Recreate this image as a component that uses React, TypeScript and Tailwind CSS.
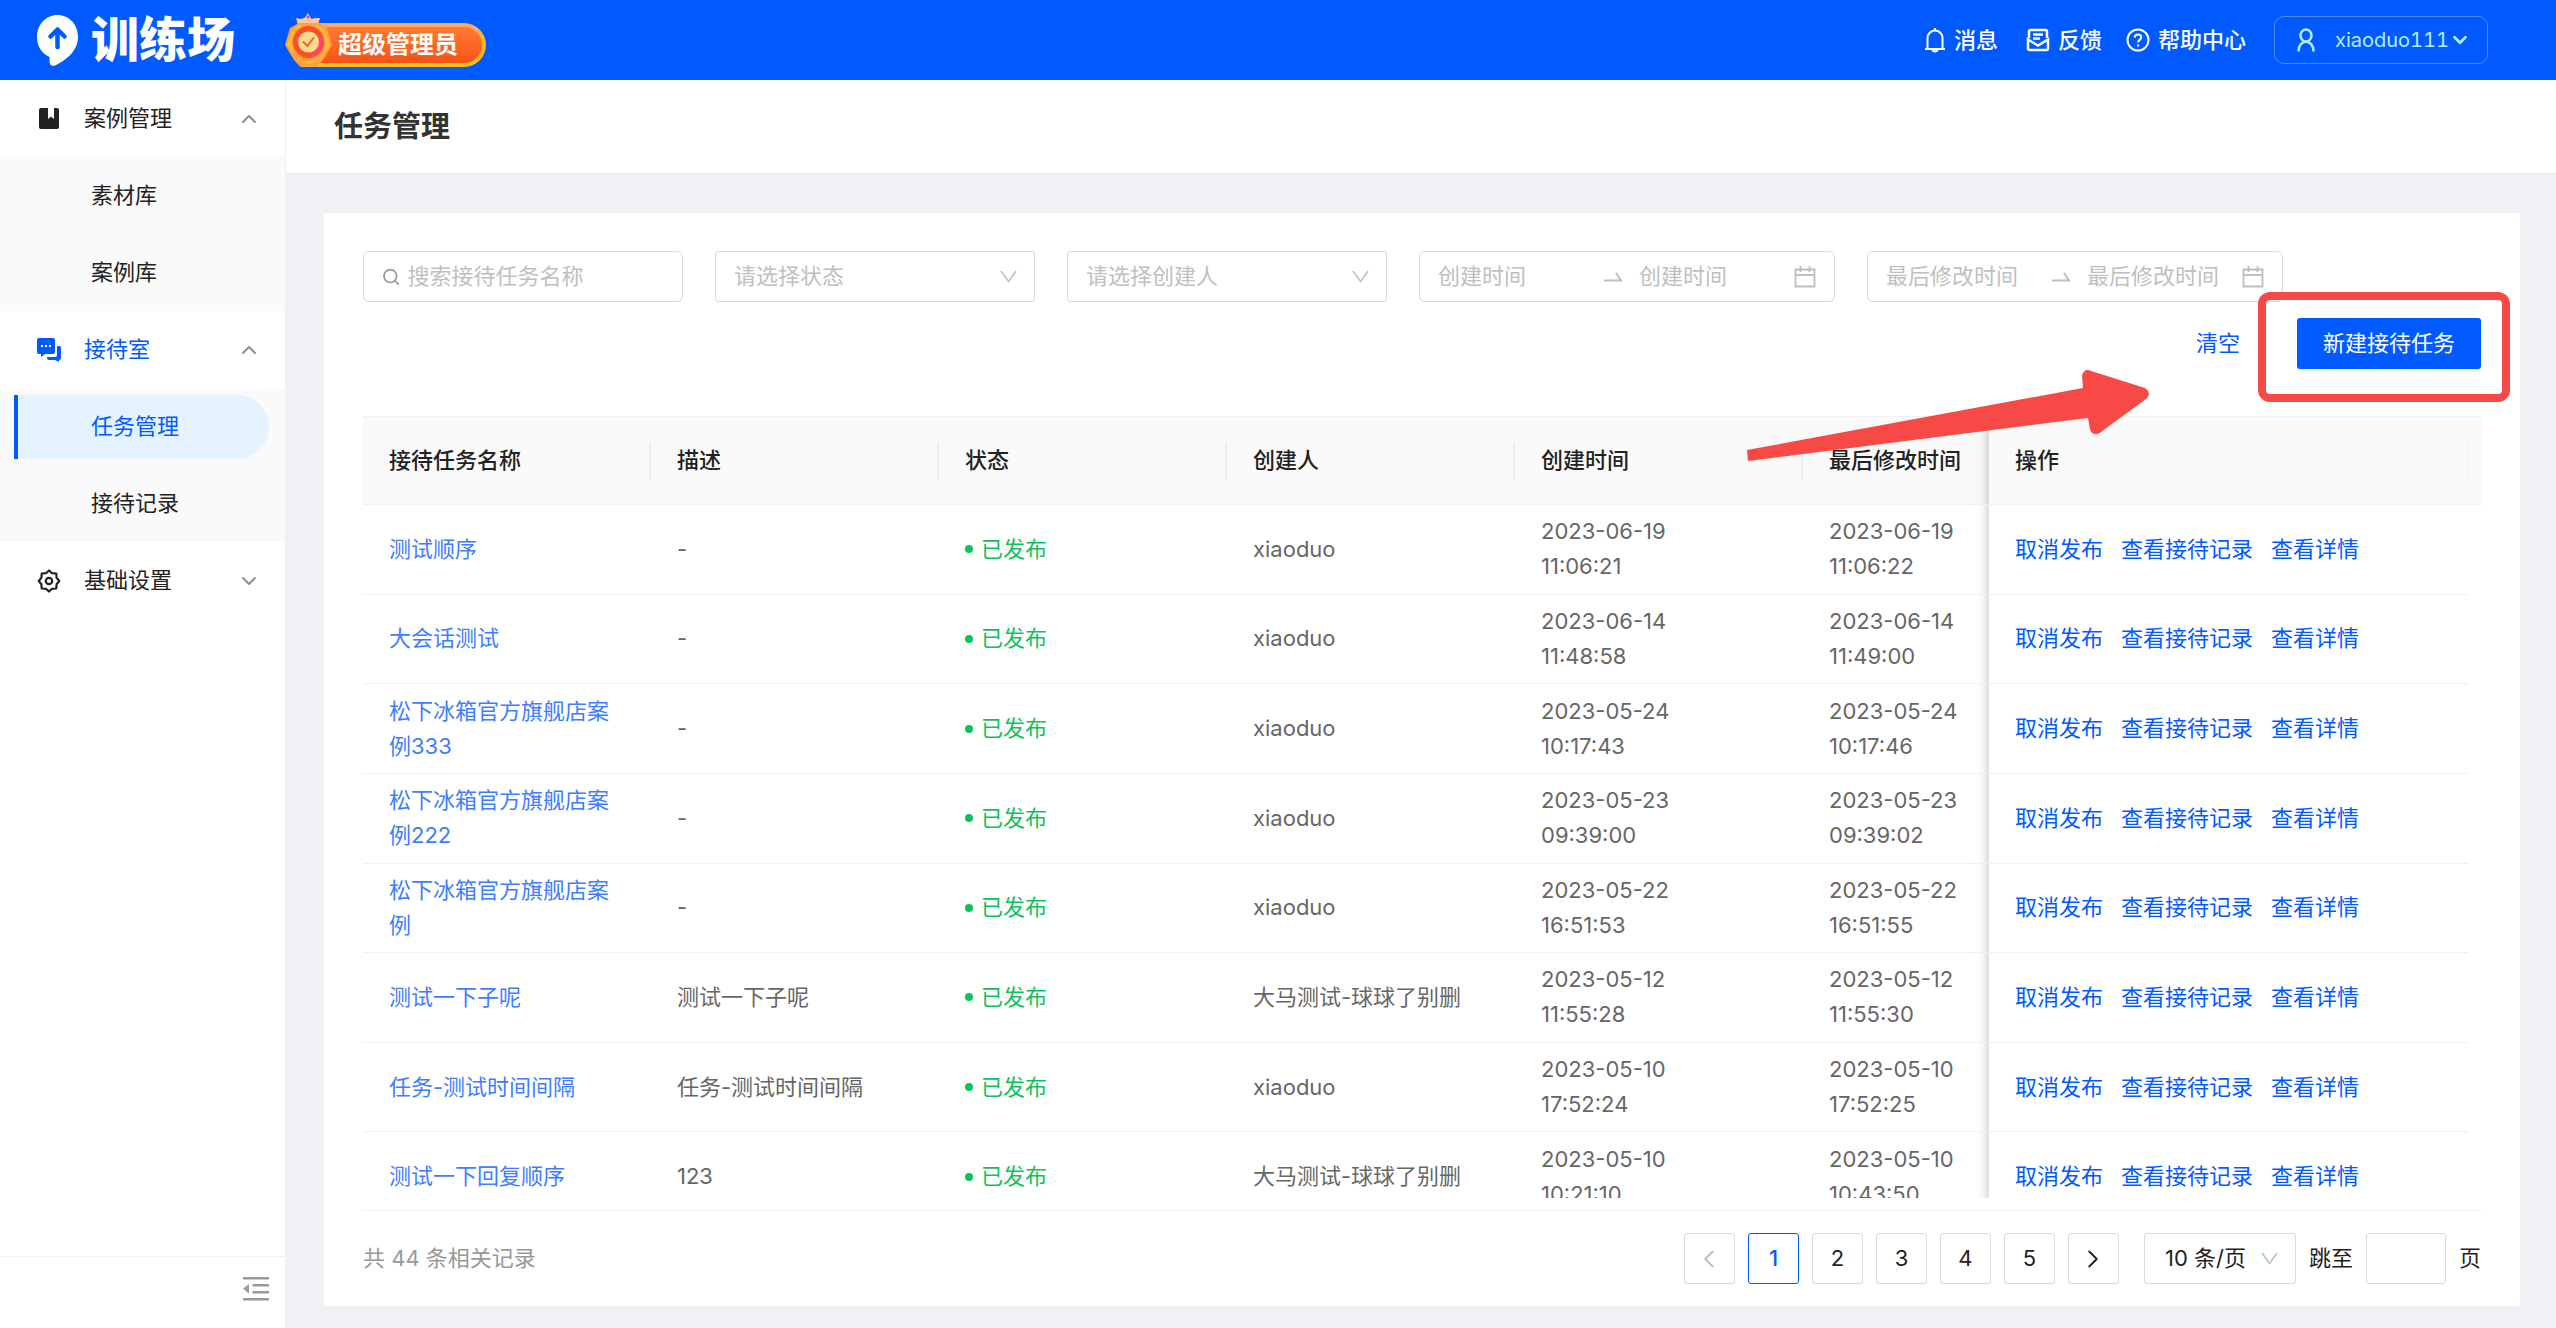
import React, { useState } from 'react';
import { ChevronDown, ChevronUp, ChevronLeft, ChevronRight } from 'lucide-react';

interface Task {
  name: string;
  desc: string;
  creator: string;
  created: [string, string];
  updated: [string, string];
}

const tasks: Task[] = [
  { name: '测试顺序', desc: '-', creator: 'xiaoduo', created: ['2023-06-19', '11:06:21'], updated: ['2023-06-19', '11:06:22'] },
  { name: '大会话测试', desc: '-', creator: 'xiaoduo', created: ['2023-06-14', '11:48:58'], updated: ['2023-06-14', '11:49:00'] },
  { name: '松下冰箱官方旗舰店案例333', desc: '-', creator: 'xiaoduo', created: ['2023-05-24', '10:17:43'], updated: ['2023-05-24', '10:17:46'] },
  { name: '松下冰箱官方旗舰店案例222', desc: '-', creator: 'xiaoduo', created: ['2023-05-23', '09:39:00'], updated: ['2023-05-23', '09:39:02'] },
  { name: '松下冰箱官方旗舰店案例', desc: '-', creator: 'xiaoduo', created: ['2023-05-22', '16:51:53'], updated: ['2023-05-22', '16:51:55'] },
  { name: '测试一下子呢', desc: '测试一下子呢', creator: '大马测试-球球了别删', created: ['2023-05-12', '11:55:28'], updated: ['2023-05-12', '11:55:30'] },
  { name: '任务-测试时间间隔', desc: '任务-测试时间间隔', creator: 'xiaoduo', created: ['2023-05-10', '17:52:24'], updated: ['2023-05-10', '17:52:25'] },
  { name: '测试一下回复顺序', desc: '123', creator: '大马测试-球球了别删', created: ['2023-05-10', '10:21:10'], updated: ['2023-05-10', '10:43:50'] },
];

const columns = ['接待任务名称', '描述', '状态', '创建人', '创建时间'];
const cell = 'px-[26px] border-b border-[#f0f0f0]';

const Header = () => (
  <header className="h-20 shrink-0 bg-[#005aff] text-white flex items-center pl-9 pr-[68px]">
    <a href="#" className="flex items-center gap-3">
      <svg width="43" height="52" viewBox="0 0 43 52" fill="none">
        <path d="M21.5 1C10 1 1 10.500 1 23c0 9.500 5 16.500 12.500 20v4c0 4.500 3 6 6.500 4C31 45.500 42 36.500 42 23 42 10.500 33 1 21.500 1z" fill="#fff" />
        <path d="M21.500 33V16M14.500 22.500l7-7 7 7" stroke="#005aff" strokeWidth="4.500" strokeLinecap="round" strokeLinejoin="round" />
      </svg>
      <span className="text-5xl font-black">训练场</span>
    </a>

    <div className="ml-[50px] flex items-end">
      <svg width="48" height="54" viewBox="0 0 48 54" className="relative z-10">
        <path d="M23 0l3.500 6 4-1 4.500 0-2 7H13l-2-7 5 1 3.500-1z" fill="#ffc9a0" />
        <circle cx="23" cy="4" r="1.500" fill="#f0379a" />
        <path d="M14 10h19l9 5 5 17-9 15-6 6.500H15L9 47 0 32 5 15z" fill="#ff9f45" />
        <path d="M14 12h19l7 6 5 14-9 13-12 6-12-6L2 32l5-14z" fill="#ffbc2e" />
        <ellipse cx="23.500" cy="30" rx="17" ry="18" fill="#fb9a3a" />
        <ellipse cx="23.500" cy="29" rx="15.500" ry="16" fill="#f9502a" />
        <path d="M36 20c6 12-1 24-13 25 8-3 12-14 13-25z" fill="#ff4472" />
        <circle cx="23.500" cy="29" r="10.500" fill="#ffd98c" />
        <path d="M18.500 29l4 4 6-8" stroke="#f4622a" strokeWidth="2" fill="none" strokeLinecap="round" />
      </svg>
      <span className="-ml-8 h-11 pl-[37px] pr-6 flex items-center rounded-r-full border-t-4 border-r-4 border-b-4 border-t-[#ffab5c] border-r-[#ffb51f] border-b-[#ffc01c] bg-gradient-to-b from-[#ff7a33] to-[#f75316] text-2xl font-bold">超级管理员</span>
    </div>

    <nav className="ml-auto flex items-center text-[22px] font-medium">
      <a href="#" className="flex items-center gap-2">
        <svg width="22" height="26" viewBox="0 0 22 26" fill="none" stroke="currentColor" strokeWidth="2">
          <path d="M1 22h20M3.500 22V11a7.500 7.500 0 0 1 15 0v11M11 3.500V1M8.500 22.500c.5 2.500 4.500 2.500 5 0" />
        </svg>
        消息
      </a>
      <a href="#" className="ml-7 flex items-center gap-2">
        <svg width="24" height="24" viewBox="0 0 24 24" fill="none" stroke="currentColor" strokeWidth="2.500">
          <path d="M3 10V3.500C3 2.500 3.500 2 4.500 2h15c1 0 1.500.5 1.500 1.500V10M7 6.500h10M7 10.500h7" />
          <path d="M2 11.500v9c0 .8.500 1.500 1.500 1.500h17c1 0 1.500-.7 1.500-1.500v-9l-10 6z" />
        </svg>
        反馈
      </a>
      <a href="#" className="ml-6 flex items-center gap-2">
        <svg width="24" height="24" viewBox="0 0 24 24" fill="none" stroke="currentColor" strokeWidth="2">
          <circle cx="12" cy="12" r="10.500" />
          <path d="M8.800 9.500c0-4 6.400-4 6.400 0 0 2.300-3.200 2.500-3.200 5M12 16.500v2" />
        </svg>
        帮助中心
      </a>
      <button className="ml-7 h-12 w-[214px] shrink-0 flex items-center pl-[22px] rounded-[10px] border border-[#4d8bff] text-xl font-normal tabular-nums text-[#b5ecff]">
        <svg width="18" height="24" viewBox="0 0 18 24" fill="none" stroke="currentColor" strokeWidth="2.500">
          <ellipse cx="9" cy="7.500" rx="5.500" ry="6" />
          <path d="M1.500 23.500c0-13 15-13 15 0" />
        </svg>
        <span className="ml-5">xiaoduo111</span>
        <ChevronDown size={22} strokeWidth={3} />
      </button>
    </nav>
  </header>
);

const MenuGroup = ({ icon, label, open, active, items }: { icon: React.ReactNode; label: string; open?: boolean; active?: boolean; items?: string[] }) => (
  <div>
    <button className={`w-full h-[77px] pl-9 pr-6 flex items-center ${active ? 'text-[#005aff]' : 'text-[#222]'}`}>
      <span className="w-[26px] flex justify-center">{icon}</span>
      <span className="ml-[22px]">{label}</span>
      {open ? <ChevronUp size={24} strokeWidth={1.800} className="ml-auto text-[#8c8c8c]" /> : <ChevronDown size={24} strokeWidth={1.800} className="ml-auto text-[#8c8c8c]" />}
    </button>
    {items?.map((item) => (
      <div key={item} className="h-[77px] bg-[#fafafa] flex items-center pl-3.5 pr-4">
        {item === '任务管理' ? (
          <a href="#" className="h-16 w-full flex items-center pl-[73px] border-l-4 border-[#005aff] rounded-r-full bg-[#e5f2ff] text-[#005aff]">{item}</a>
        ) : (
          <a href="#" className="pl-[77px] text-[#222]">{item}</a>
        )}
      </div>
    ))}
  </div>
);

const Sidebar = () => (
  <aside className="w-[286px] shrink-0 border-r border-[#f0f0f0] bg-white flex flex-col">
    <MenuGroup
      label="案例管理"
      open
      items={['素材库', '案例库']}
      icon={
        <svg width="20" height="22" viewBox="0 0 20 22" fill="#222">
          <path d="M2 0h7v11l3-2.500 3 2.500V0h3a2 2 0 0 1 2 2v17a2 2 0 0 1-2 2H2a2 2 0 0 1-2-2V2a2 2 0 0 1 2-2z" />
        </svg>
      }
    />
    <MenuGroup
      label="接待室"
      open
      active
      items={['任务管理', '接待记录']}
      icon={
        <svg width="24" height="24" viewBox="0 0 24 24" fill="#005aff">
          <path d="M2 0h14a2 2 0 0 1 2 2v12a2 2 0 0 1-2 2H8l-4 3v-3H2a2 2 0 0 1-2-2V2a2 2 0 0 1 2-2z" />
          <path d="M20 8h2a2 2 0 0 1 2 2v10a2 2 0 0 1-2 2v2l-4-2h-6a2 2 0 0 1-2-2v-1h8a2 2 0 0 0 2-2z" />
          <path d="M4 7h2v2H4zM8 7h2v2H8zM12 7h2v2h-2z" fill="#fff" />
        </svg>
      }
    />
    <MenuGroup
      label="基础设置"
      icon={
        <svg width="24" height="24" viewBox="0 0 24 24" fill="none" stroke="#222" strokeWidth="2.200" strokeLinejoin="round">
          <path d="M12 1.500l3 2.700 4.300.3.300 4.300 2.700 3.200-2.700 3.200-.3 4.300-4.300.3-3 2.700-3-2.700-4.300-.3-.3-4.300L1.700 12l2.700-3.200.3-4.300L9 4.200z" />
          <circle cx="12" cy="12" r="3.200" />
        </svg>
      }
    />
    <div className="mt-auto h-[72px] border-t border-[#f0f0f0] flex justify-end pr-4 pt-5">
      <button aria-label="收起菜单" className="self-start">
        <svg width="26" height="24" viewBox="0 0 26 24" fill="#999">
          <path d="M0 0h26v2.500H0zM9.500 7H26v2.500H9.500zM9.500 14H26v2.500H9.500zM0 21h26v2.500H0zM6 7v9.500L0 11.700z" />
        </svg>
      </button>
    </div>
  </aside>
);

const DownArrow = ({ className }: { className?: string }) => (
  <svg width="17" height="13" viewBox="0 0 17 13" fill="none" stroke="#bfbfbf" strokeWidth="1.500" className={className}>
    <path d="M1 1l7.500 10.500L16 1" />
  </svg>
);

const SelectBox = ({ label }: { label: string }) => (
  <div className="relative w-80 h-[51px]">
    <select aria-label={label} className="w-full h-full pl-[18px] appearance-none border border-[#d9d9d9] rounded-[3px] bg-white text-[#bfbfbf]">
      <option>{label}</option>
    </select>
    <DownArrow className="absolute right-[18px] top-[19px]" />
  </div>
);

const DateRange = ({ label }: { label: string }) => (
  <div className="w-[416px] h-[51px] flex items-center px-[18px] border border-[#d9d9d9] rounded-md">
    <input aria-label={`${label}开始`} placeholder={label} className="w-0 flex-1 outline-none placeholder:text-[#bfbfbf]" />
    <svg width="20" height="10" viewBox="0 0 20 10" fill="none" stroke="#bfbfbf" strokeWidth="2" className="mx-4">
      <path d="M1 8.500h17L13 1" />
    </svg>
    <input aria-label={`${label}结束`} placeholder={label} className="w-0 flex-1 outline-none placeholder:text-[#bfbfbf]" />
    <svg width="22" height="22" viewBox="0 0 22 22" fill="none" stroke="#bfbfbf" strokeWidth="1.800" className="ml-1.5">
      <path d="M1.500 3.500h19v17h-19zM1.500 9h19M6.500 0v6M15.500 0v6" />
    </svg>
  </div>
);

const Filters = () => (
  <div>
    <div className="flex flex-wrap gap-x-8 gap-y-4">
      <label className="w-80 h-[51px] flex items-center gap-2 pl-[19px] pr-4 border border-[#d9d9d9] rounded-md">
        <svg width="18" height="18" viewBox="0 0 18 18" fill="none" stroke="#999" strokeWidth="1.800">
          <circle cx="8" cy="8" r="7" />
          <path d="M13 13l4.500 4.500" />
        </svg>
        <input aria-label="搜索" placeholder="搜索接待任务名称" className="w-full outline-none placeholder:text-[#bfbfbf]" />
      </label>
      <SelectBox label="请选择状态" />
      <SelectBox label="请选择创建人" />
      <DateRange label="创建时间" />
      <DateRange label="最后修改时间" />
    </div>
    <div className="mt-4 flex justify-end items-center">
      <button className="text-[#005aff]">清空</button>
      <div className="relative ml-[57px]">
        <button className="h-[51px] px-[26px] rounded-[3px] bg-[#005aff] text-white shadow-[0_3px_0_rgba(0,0,0,0.04)]">新建接待任务</button>
        {/* red highlight and arrow drawn over the page */}
        <div className="absolute -left-[39px] -right-[29px] -top-[26px] -bottom-[33px] border-8 border-[#f74a46] rounded-[12px] pointer-events-none" />
        <svg width="402" height="92" viewBox="0 0 402 92" className="absolute right-[332px] top-[52px] z-10 pointer-events-none" fill="#f74a46">
          <path d="M0 80L336 18 335 6C336 0 341-1 344 1L398 18C403 21 403 26 399 29L354 62C349 66 344 64 343 59L341 48 1 91z" />
        </svg>
      </div>
    </div>
  </div>
);

const TaskTable = () => (
  <div className="mt-[47px] flex-1 min-h-0 overflow-hidden">
    <table className="w-full h-[806px] table-fixed border-separate border-spacing-0 text-left">
      <colgroup>
        {columns.map((c) => <col key={c} className="w-[288px]" />)}
        <col className="w-[186px]" />
        <col className="w-[479px]" />
        <col className="w-[13px]" />
      </colgroup>
      <thead>
        <tr className="h-[89px] bg-[#fafafa] text-[#222]">
          {columns.map((c) => (
            <th key={c} className="p-0 border-y border-[#f0f0f0] font-medium">
              <div className="h-9 flex items-center pl-[26px] border-r-2 border-[#ebebeb]">{c}</div>
            </th>
          ))}
          <th className="pl-[26px] border-y border-[#f0f0f0] font-medium whitespace-nowrap shadow-[inset_-14px_0_12px_-12px_rgba(0,0,0,0.2)]">最后修改时间</th>
          <th className="p-0 border-y border-[#f0f0f0] font-medium">
            <div className="h-9 flex items-center pl-[26px] border-r border-[#f0f0f0]">操作</div>
          </th>
          <td className="border-y border-[#f0f0f0]" />
        </tr>
      </thead>
      <tbody className="text-[#666]">
        {tasks.map((task) => (
          <tr key={task.name}>
            <td className={cell}><a href="#" className="text-[#3d7eff]">{task.name}</a></td>
            <td className={cell}>{task.desc}</td>
            <td className={cell}>
              <span className="flex items-center gap-2 text-[#0fc15c]">
                <span className="w-2 h-2 rounded-full bg-[#0fc15c]" />
                已发布
              </span>
            </td>
            <td className={cell}>{task.creator}</td>
            <td className={cell}>{task.created[0]}<br />{task.created[1]}</td>
            <td className="pl-[26px] border-b border-[#f0f0f0] whitespace-nowrap shadow-[inset_-14px_0_12px_-12px_rgba(0,0,0,0.2)]">{task.updated[0]}<br />{task.updated[1]}</td>
            <td className={cell}>
              <div className="flex gap-[18px] text-[#005aff]">
                <a href="#">取消发布</a>
                <a href="#">查看接待记录</a>
                <a href="#">查看详情</a>
              </div>
            </td>
            <td />
          </tr>
        ))}
      </tbody>
    </table>
  </div>
);

const Pagination = () => {
  const [page, setPage] = useState(1);
  const box = 'w-[51px] h-[51px] flex items-center justify-center border rounded-[3px]';

  return (
    <div className="mt-3 pt-[22px] border-t border-[#f0f0f0] flex items-center text-[#222]">
      <span className="text-[#999]">共 44 条相关记录</span>
      <div className="ml-auto flex items-center gap-[13px]">
        <button aria-label="上一页" className={`${box} border-[#d9d9d9] text-[#bfbfbf]`}><ChevronLeft size={30} strokeWidth={1.500} /></button>
        {[1, 2, 3, 4, 5].map((n) => (
          <button key={n} onClick={() => setPage(n)} className={`${box} ${n === page ? 'border-[#005aff] text-[#005aff] font-medium' : 'border-[#d9d9d9]'}`}>{n}</button>
        ))}
        <button aria-label="下一页" className={`${box} border-[#d9d9d9]`}><ChevronRight size={30} strokeWidth={1.500} /></button>
        <div className="relative ml-3 w-[152px] h-[51px]">
          <select aria-label="每页条数" className="w-full h-full pl-5 appearance-none border border-[#d9d9d9] rounded-[3px] bg-white">
            <option>10 条/页</option>
          </select>
          <DownArrow className="absolute right-[18px] top-[19px]" />
        </div>
        <label htmlFor="jump">跳至</label>
        <input id="jump" className="w-20 h-[51px] px-3 border border-[#d9d9d9] rounded-[3px] outline-none" />
        <span>页</span>
      </div>
    </div>
  );
};

const App = () => (
  <div className="h-screen flex flex-col bg-[#f0f1f5] text-[22px] leading-[35px] font-['Inter','Noto_Sans_CJK_SC',sans-serif]">
    <Header />
    <div className="flex-1 min-h-0 flex">
      <Sidebar />
      <main className="flex-1 min-w-0 flex flex-col">
        <div className="h-[94px] shrink-0 flex items-center pl-12 bg-white border-b border-[#e8e8e8]">
          <h1 className="text-[29px] font-bold text-[#333]">任务管理</h1>
        </div>
        <section className="flex-1 min-h-0 mt-[39px] ml-[38px] mr-9 mb-[22px] px-[39px] pt-[38px] pb-[22px] bg-white flex flex-col">
          <Filters />
          <TaskTable />
          <Pagination />
        </section>
      </main>
    </div>
  </div>
);

export default App;
